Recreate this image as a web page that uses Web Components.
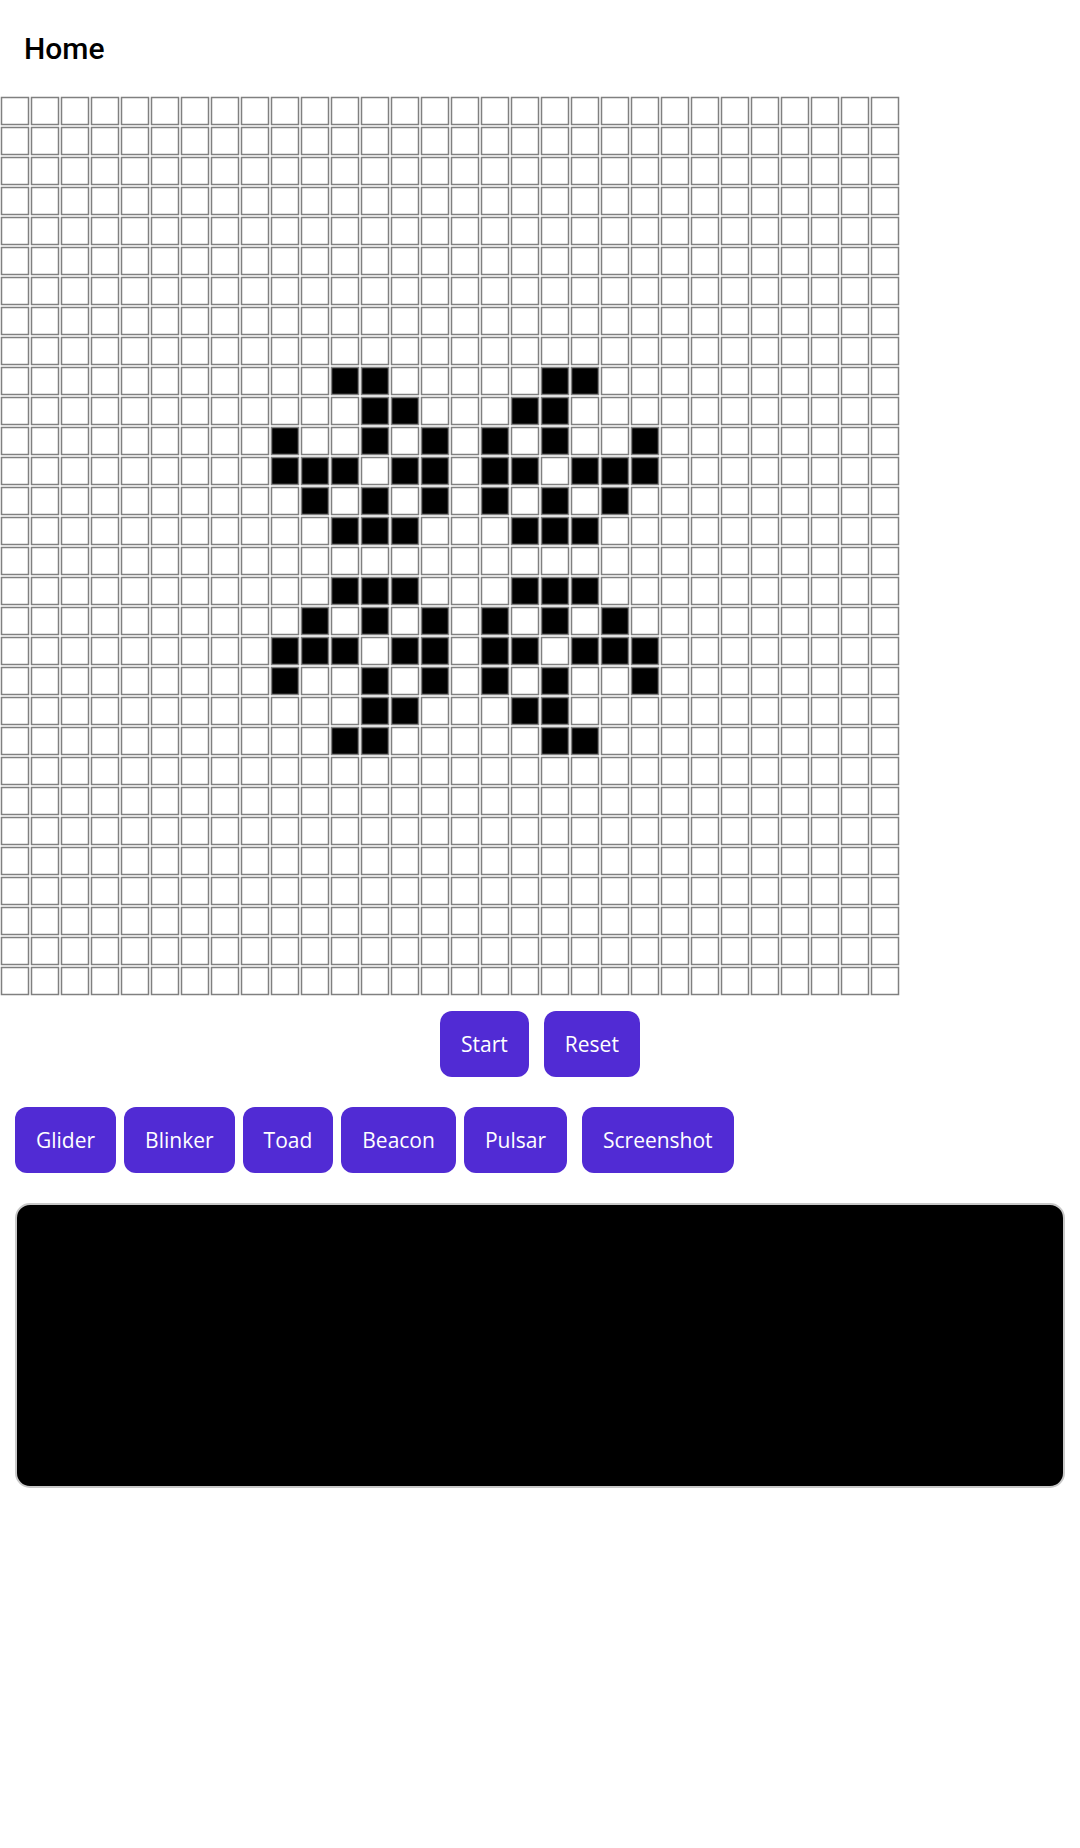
<!DOCTYPE html>
<html lang="en">
<head>
<meta charset="utf-8">
<meta name="viewport" content="width=device-width, initial-scale=1">
<title>Home</title>
<style>
  body { margin: 0; background: #fff; font-family: "Open Sans", sans-serif; }
</style>
</head>
<body>
<life-page>
  <page-title slot="header">Home</page-title>
  <life-board></life-board>
  <button-row align="center">
    <action-button>Start</action-button>
    <action-button>Reset</action-button>
  </button-row>
  <button-row>
    <button-group>
      <action-button pattern="glider">Glider</action-button>
      <action-button pattern="blinker">Blinker</action-button>
      <action-button pattern="toad">Toad</action-button>
      <action-button pattern="beacon">Beacon</action-button>
      <action-button pattern="pulsar">Pulsar</action-button>
    </button-group>
    <action-button>Screenshot</action-button>
  </button-row>
  <shot-frame></shot-frame>
</life-page>
<script>
  const define = (name, markup, setup) => {
    const template = document.createElement('template');
    template.innerHTML = markup;
    customElements.define(name, class extends HTMLElement {
      constructor() {
        super();
        this.attachShadow({ mode: 'open' }).append(template.content.cloneNode(true));
        if (setup) setup(this.shadowRoot);
      }
    });
  };

  define('life-page', `
    <style>
      :host { display: flex; flex-direction: column; min-height: 100vh; }
      main { display: flex; flex-direction: column; }
    </style>
    <header><slot name="header"></slot></header>
    <main><slot></slot></main>`);

  define('page-title', `
    <style>
      :host { display: block; padding: 31px 24px 29px; }
      h1 { margin: 0; font: 500 30px/36px Roboto, sans-serif; color: #000; }
    </style>
    <h1><slot></slot></h1>`);

  define('button-row', `
    <style>
      :host { display: flex; flex-wrap: wrap; gap: 15px; padding: 15px; }
      :host([align="center"]) { justify-content: center; }
    </style>
    <slot></slot>`);

  define('button-group', `
    <style>:host { display: flex; flex-wrap: wrap; gap: 8px; }</style>
    <slot></slot>`);

  define('action-button', `
    <style>
      :host { display: block; }
      button {
        display: block; height: 66px; padding: 0 21px; border: 0; border-radius: 12px;
        background: #512bd4; color: #fff; font: 400 21px/30px "Open Sans", sans-serif;
        font-kerning: none; cursor: pointer;
      }
    </style>
    <button type="button"><slot></slot></button>`);

  define('shot-frame', `
    <style>
      :host {
        display: block; box-sizing: border-box; height: 285px; margin: 15px;
        border: 2px solid #c8c8c8; border-radius: 15px; background: #000;
      }
    </style>`);

  const SIZE = 30;
  const CELL = 30;
  // Live columns of each row; the top half is mirrored below the centre row.
  const half = {
    9: [11, 12, 18, 19],
    10: [12, 13, 17, 18],
    11: [9, 12, 14, 16, 18, 21],
    12: [9, 10, 11, 13, 14, 16, 17, 19, 20, 21],
    13: [10, 12, 14, 16, 18, 20],
    14: [11, 12, 13, 17, 18, 19]
  };
  const isAlive = (row, col) => (half[row > 15 ? 30 - row : row] || []).includes(col);

  define('life-board', `
    <style>
      :host { display: block; overflow: hidden; }
      svg { display: block; }
      rect { fill: #fff; stroke: #808080; stroke-width: 1.5; }
      .alive { fill: #000; }
    </style>
    <svg role="img" aria-label="Game of Life board"></svg>`, root => {
    const svg = root.querySelector('svg');
    svg.setAttribute('width', SIZE * CELL);
    svg.setAttribute('height', SIZE * CELL);
    for (let row = 0; row < SIZE; row++) {
      for (let col = 0; col < SIZE; col++) {
        const rect = document.createElementNS('http://www.w3.org/2000/svg', 'rect');
        rect.setAttribute('x', col * CELL + 1.5);
        rect.setAttribute('y', row * CELL + 1.5);
        rect.setAttribute('width', CELL - 3);
        rect.setAttribute('height', CELL - 3);
        if (isAlive(row, col)) rect.setAttribute('class', 'alive');
        svg.append(rect);
      }
    }
  });
</script>
</body>
</html>
